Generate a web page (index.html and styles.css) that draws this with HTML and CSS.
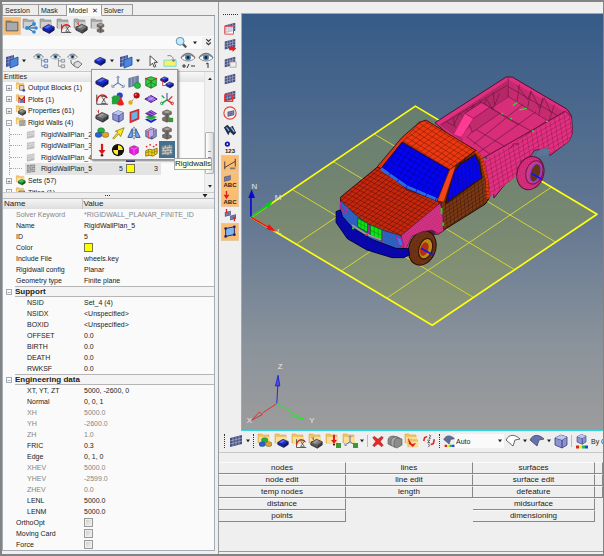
FILE: index.html
```html
<!DOCTYPE html>
<html lang="en">
<head>
<meta charset="utf-8">
<title>Model browser</title>
<link rel="stylesheet" href="styles.css">
</head>
<body>
<svg class="defs" aria-hidden="true">
  <defs>
    <symbol id="plate" viewBox="0 0 16 16"><path d="M1 7l7-4 7 3v4l-6 4-8-4z" fill="currentColor" stroke="#223" stroke-width=".8"/><path d="M1 7l8 3v4l-8-4z" fill="#000" opacity=".25"/><path d="M9 10l6-4v4l-6 4z" fill="#000" opacity=".45"/><path d="M3 7l5-3 3 1-5 3z" fill="#fff" opacity=".3"/></symbol>
    <symbol id="folder" viewBox="0 0 16 16"><path d="M1 1h4l1 1h6v8H1z" fill="#f0c468" stroke="#d8a850" stroke-width=".6"/><path d="M2 4h11v6H2z" fill="#fce09a"/></symbol>
    <symbol id="gfolder" viewBox="0 0 16 16"><path d="M1 1h4l1 1h6v8H1z" fill="#a8a8a8" stroke="#888" stroke-width=".6"/><path d="M2 4h11v6H2z" fill="#cfcfcf"/></symbol>
    <symbol id="bigfolder" viewBox="0 0 16 16"><path d="M2 3h5l1 1h6v9H2z" fill="#858585" stroke="#666" stroke-width=".7"/><path d="M3 5h10v7H3z" fill="#aaa"/></symbol>
    <symbol id="share" viewBox="0 0 16 16"><use href="#gfolder"/><path d="M5 10l7-4M5 10l9 0M5 10l7 4" stroke="#257" fill="none"/><g fill="#2b8be0"><circle cx="5" cy="10" r="2"/><circle cx="12" cy="6" r="2"/><circle cx="14" cy="10" r="1.8"/><circle cx="12" cy="14" r="1.8"/></g></symbol>
    <symbol id="graph" viewBox="0 0 16 16"><path d="M2 14V3M2 14h13" stroke="#333" fill="none"/><path d="M2 11c1-8 8-10 12-4" fill="none" stroke="#e02020" stroke-width="1.6"/><path d="M7 5h6M7 13h6M8 6l4 6M12 6l-4 6" stroke="#444" fill="none"/></symbol>
    <symbol id="beam" viewBox="0 0 16 16"><path d="M3 3l5-2 5 2v3l-3 1v3l3 1v2l-5 2-5-2v-3l3-1V7L3 6z" fill="#79716d" stroke="#4c4744" stroke-width=".7"/><path d="M4 3l4-1 4 1-4 2z" fill="#aaa09c"/><path d="M8 5v9" stroke="#4c4744"/></symbol>
    <symbol id="eye" viewBox="0 0 16 16"><path d="M1 6c4-6 10-6 14 0" fill="none" stroke="#777" stroke-width="1.4"/><path d="M1 6c4 4 10 4 14 0-4-4-10-4-14 0z" fill="#fff" stroke="#777" stroke-width=".8"/><circle cx="8" cy="5.500" r="3" fill="#4b86b8"/><circle cx="8" cy="5.500" r="1.400" fill="#123"/></symbol>
    <symbol id="mesh" viewBox="0 0 16 16"><path d="M2 4l8-2v10l-8 2z" fill="#454f91"/><path d="M2 7l8-2M2 10l8-2M5 3v10M8 2v10" stroke="#a6aed9" stroke-width=".6"/><path d="M6 7l8-3v8l-8 3z" fill="#4a87dc" stroke="#1b4d9c" stroke-width=".8"/></symbol>
    <symbol id="grid" viewBox="0 0 16 16"><path d="M2 5l12-3v9L2 14z" fill="#45507f"/><path d="M2 8l12-3M2 11l12-3M5 4v9M8 3v9M11 3v9" stroke="#a5abc6" stroke-width=".8"/></symbol>
    <symbol id="cube" viewBox="0 0 16 16"><path d="M2 5l6-3 6 2v8l-5 3-7-3z" fill="#8b93d2" stroke="#373d79" stroke-width=".8"/><path d="M2 5l7 2 5-3M9 7v8" stroke="#373d79" fill="none"/><path d="M2 5l6-3 6 2-5 3z" fill="#bfc5ec"/></symbol>
    <symbol id="axes" viewBox="0 0 16 16"><path d="M8 9V2M8 9l-6 4M8 9l6 4" stroke="#596fa8" stroke-width="1.3" fill="none"/><path d="M6 3l2-2 2 2M1 11v3h3M12 14h3v-3" fill="none" stroke="#596fa8" stroke-width=".8"/></symbol>
    <symbol id="axesrg" viewBox="0 0 16 16"><path d="M8 9V1" stroke="#4560b0" stroke-width="1.300"/><path d="M8 9l-6 4M2 4l3 3" stroke="#18a048" stroke-width="1.500"/><path d="M8 9l6 4M14 5l-4 4" stroke="#d22" stroke-width="1.500"/><circle cx="2" cy="13" r="1.500" fill="none" stroke="#18a048"/><circle cx="14" cy="13" r="1.500" fill="none" stroke="#d22"/></symbol>
    <symbol id="greenmesh" viewBox="0 0 16 16"><path d="M2 4l11-3v10L2 14z" fill="#7084a9" stroke="#405078" stroke-width=".6"/><path d="M5 3v10M9 2v10" stroke="#aab"/><circle cx="12" cy="12" r="3.500" fill="#20c340" stroke="#087018" stroke-width=".6"/></symbol>
    <symbol id="greencube" viewBox="0 0 16 16"><path d="M2 4l6-2 6 2v8l-6 3-6-3z" fill="#3cc84b" stroke="#08861d"/><path d="M2 4l6 3 6-3M8 7v8M2 12l6-4 6 4" fill="none" stroke="#08861d"/><g fill="#e22"><circle cx="2" cy="4" r="1"/><circle cx="14" cy="4" r="1"/><circle cx="8" cy="7" r="1"/><circle cx="8" cy="14" r="1"/></g></symbol>
    <symbol id="twoplates" viewBox="0 0 16 16"><use href="#plate" width="10" height="10"/><use href="#plate" x="6" y="6" width="10" height="10"/><path d="M3 6v6h5" fill="none" stroke="#d22" stroke-width=".9"/></symbol>
    <symbol id="shapes" viewBox="0 0 16 16"><circle cx="10" cy="4" r="3.500" fill="#2343ce"/><path d="M1 6l2-2h7v7l-1 3H1z" fill="#23a43a"/><path d="M11 5l4 9c-2 2-6 2-8 0z" fill="#e32424"/></symbol>
    <symbol id="balls" viewBox="0 0 16 16"><circle cx="11" cy="4" r="3.500" fill="#b80d0d"/><circle cx="10" cy="3" r="1" fill="#ff8c6c"/><circle cx="4" cy="12" r="2.500" fill="#e6ad16"/><path d="M6 10l3-4" stroke="#555" stroke-dasharray="1"/></symbol>
    <symbol id="rhomb" viewBox="0 0 16 16"><path d="M1 8l7-4 7 4-7 4z" fill="#8b4ed0" stroke="#311782"/><path d="M4 6l7 4M6 5l7 4M4 10l7-4" stroke="#d8b4ff" stroke-width=".8"/></symbol>
    <symbol id="graysection" viewBox="0 0 16 16"><g color="#777"><use href="#plate" y="1"/></g><path d="M2 2l2 2M1 7h3" stroke="#222" stroke-dasharray="1"/><path d="M4 1v4" stroke="#c22"/></symbol>
    <symbol id="redframe" viewBox="0 0 16 16"><path d="M4 4l9-3v10l-9 4z" fill="#67b4e5" stroke="#d52b2b" stroke-width="2"/></symbol>
    <symbol id="layers" viewBox="0 0 16 16"><path d="M1 12l7-3 7 3-7 4z" fill="#2424cd"/><path d="M1 9l7-3 7 3-7 4z" fill="#19af35" stroke="#eee" stroke-width=".5"/><path d="M1 5l7-4 7 4-7 4z" fill="#6e2ca6"/><path d="M4 4l7 3M7 2l6 4" stroke="#caf" stroke-width=".7"/></symbol>
    <symbol id="beamgreen" viewBox="0 0 16 16"><use href="#beam"/><path d="M10 10h5v5h-5z" fill="#3c9632"/></symbol>
    <symbol id="trio" viewBox="0 0 16 16"><g stroke="#253" stroke-width=".5"><ellipse cx="7" cy="5" rx="4" ry="3" fill="#25b338"/><ellipse cx="4" cy="10" rx="4" ry="3" fill="#285fe0"/><ellipse cx="12" cy="10" rx="4" ry="3" fill="#eca023"/></g></symbol>
    <symbol id="arrowup" viewBox="0 0 16 16"><path d="M2 14l6-7-3-1 10-4-4 10-2-3-6 6z" fill="#ffe91a" stroke="#877a10" stroke-width=".9"/></symbol>
    <symbol id="mirror" viewBox="0 0 16 16"><path d="M6 3v10H1zM10 3v10h5z" fill="#76b2ef" stroke="#17499e"/><path d="M8 1v14" stroke="#333" stroke-dasharray="2 1"/></symbol>
    <symbol id="cubecut" viewBox="0 0 16 16"><use href="#cube"/><path d="M5 5l6-2v8l-6 3z" fill="#a7b4ed" stroke="#da4055"/></symbol>
    <symbol id="load" viewBox="0 0 16 16"><path d="M8 1v9" stroke="#df1515" stroke-width="2.500"/><path d="M4 8h8l-4 5z" fill="#df1515"/><circle cx="8" cy="14" r="1.500" fill="#611"/></symbol>
    <symbol id="mass" viewBox="0 0 16 16"><circle cx="8" cy="8" r="7" fill="#111"/><path d="M8 2.500V8h5.500A5.500 5.500 0 0 0 8 2.500zM8 8v5.500A5.500 5.500 0 0 1 2.500 8z" fill="#ffe92c"/></symbol>
    <symbol id="pink" viewBox="0 0 16 16"><path d="M3 5l5-2 5 2v6l-5 3-5-3z" fill="#e51bdc" stroke="#871382" stroke-width=".7"/><path d="M3 5l5 2 5-2M8 7v7" stroke="#ff8bff" stroke-width=".7" fill="none"/></symbol>
    <symbol id="dots" viewBox="0 0 16 16"><path d="M2 9l4-2 4 1 5-2v6l-5 3-4-1-4 1z" fill="#f1d415" stroke="#876d08"/><path d="M5 8v6M9 8v6M12 7v6M2 11l4-1 4 1 5-2" stroke="#876d08" fill="none" stroke-width=".7"/><g fill="#d22"><circle cx="3" cy="4" r="1"/><circle cx="7" cy="2" r="1"/><circle cx="11" cy="4" r="1"/><circle cx="14" cy="2" r="1"/></g></symbol>
    <symbol id="wall" viewBox="0 0 16 16"><path d="M2 3l12-1v11L2 14z" fill="#858a85"/><path d="M2 6l12-1M2 9l12-1M2 12l12-1M6 3v3M11 2v3M4 6v3M9 5v3M6 9v3M12 8v3M9 11v3" stroke="#ddd" stroke-width=".8"/></symbol>
    <symbol id="wallpale" viewBox="0 0 16 16"><path d="M2 4l11-2v10L2 14z" fill="#bbb"/><path d="M2 7l11-2M2 10l11-2M5 3v3M9 3v3M7 6v3M11 5v3M5 9v3" stroke="#eee" stroke-width=".8"/></symbol>
    <symbol id="cursor" viewBox="0 0 16 16"><path d="M5 1v12l3-3 2 5 2-1-2-5h4z" fill="#fff" stroke="#222"/></symbol>
    <symbol id="note" viewBox="0 0 16 16"><path d="M1 7h14v7H1z" fill="#f6f36b" stroke="#68d8db"/><path d="M5 2c5-1 7 2 7 6M10 6l2 3 2-3" fill="none" stroke="#777"/></symbol>
    <symbol id="cross" viewBox="0 0 16 16"><path d="M3 1l5 4 5-4 2 2-4 5 4 5-2 2-5-4-5 4-2-2 4-5-4-5z" fill="#e62929" stroke="#8b1515" stroke-width=".6"/></symbol>
    <symbol id="stack" viewBox="0 0 16 16"><g fill="#8b8b8b" stroke="#555" stroke-width=".6"><path d="M1 7c0-3 3-4 5-4l5 1v6l-6 3-4-2z"/><path d="M4 8c0-3 3-4 5-4l4 1v6l-6 3-3-2z" fill="#aaa"/><path d="M7 9c0-3 3-4 4-4l4 1v6l-5 3-3-1z"/></g></symbol>
    <symbol id="nums" viewBox="0 0 16 16"><path d="M2 8l1-4 3-1M14 6l-1 5-3 1" fill="none" stroke="#d22" stroke-width="1.800"/><path d="M8 1l2 1-2 3h2M6 7h3l-2 2 2 1H6M7 12l2 1-2 2" fill="none" stroke="#555"/></symbol>
    <symbol id="leaf" viewBox="0 0 16 16"><path d="M1 7c3-6 9-6 14-1l-5 1-2 6z" fill="currentColor" stroke="#555" stroke-width=".9"/></symbol>
    <symbol id="rainbow" viewBox="0 0 16 16"><path d="M2 14h3" stroke="#d22" stroke-width="3"/><path d="M5 14h3" stroke="#ee2" stroke-width="3"/><path d="M8 14h3" stroke="#2b4" stroke-width="3"/><path d="M11 14h3" stroke="#24e" stroke-width="3"/></symbol>
    <symbol id="down" viewBox="0 0 5 4"><path d="M0 0h5L2.500 3.500z" fill="#222"/></symbol>
    <symbol id="tiny" viewBox="0 0 16 16"><path d="M5 1v11h4M5 4h4" fill="none" stroke="#777"/><path d="M9 2h5v4H9zM9 10h5v4H9z" fill="#dce5f5" stroke="currentColor"/></symbol>
  </defs>
</svg>
<div class="app">
  <aside class="sidebar">
    <nav class="tabs">
      <button class="tab">Session</button><button class="tab">Mask</button><button class="tab tab-on">Model <span class="x">✕</span></button><button class="tab">Solver</button>
    </nav>
    <div class="panel">
      <div class="tools tools-a">
        <button class="ico on" aria-label="Model view"><svg viewBox="0 0 16 16"><use href="#bigfolder"/></svg></button>
        <button class="ico" aria-label="Hierarchy"><svg viewBox="0 0 16 16"><use href="#share"/></svg></button>
        <button class="ico blue" aria-label="Components"><svg viewBox="0 0 16 16"><use href="#gfolder"/><use href="#plate" x="3" y="4" width="13" height="13"/></svg></button>
        <button class="ico" aria-label="Curves"><svg viewBox="0 0 16 16"><use href="#gfolder"/><use href="#graph" x="4" y="4" width="12" height="12"/></svg></button>
        <button class="ico" aria-label="Properties"><svg viewBox="0 0 16 16"><use href="#gfolder"/><use href="#graysection" x="2" y="3" width="13" height="13"/></svg></button>
        <button class="ico" aria-label="Sections"><svg viewBox="0 0 16 16"><use href="#gfolder"/><use href="#beam" x="5" y="4" width="11" height="12"/></svg></button>
      </div>
      <div class="search">
        <input type="text" aria-label="Search">
        <button class="ico" aria-label="Find"><svg viewBox="0 0 16 16"><path d="M10 9l4 4" stroke="#555" stroke-width="2.500"/><circle cx="7" cy="6" r="4.500" fill="#c4ecfc" stroke="#5683a5"/></svg></button>
        <svg class="down"><use href="#down"/></svg>
        <button class="more" aria-label="More"><svg viewBox="0 0 8 8"><path d="M2 1l2 2 2-2M2 4l2 2 2-2" fill="none" stroke="#334"/></svg></button>
      </div>
      <div class="tools tools-b">
        <button class="ico" aria-label="Elements"><svg viewBox="0 0 16 16"><use href="#mesh"/></svg></button>
        <svg class="down"><use href="#down"/></svg>
        <button class="ico first-eye" aria-label="Show tree"><svg viewBox="0 0 16 16"><use href="#eye" width="11" height="11"/><use href="#tiny" x="5" y="5" width="11" height="11" color="#35a"/></svg></button>
        <button class="ico" aria-label="Hide tree"><svg viewBox="0 0 16 16"><use href="#eye" width="11" height="11"/><use href="#tiny" x="5" y="5" width="11" height="11" color="#777"/></svg></button>
        <button class="ico" aria-label="Isolate"><svg viewBox="0 0 16 16"><use href="#eye" width="11" height="11"/><path d="M4 7v3l3 3M7 10l4-2 4 3-4 4-4-2z" fill="#ddd" stroke="#777"/></svg></button>
        <button class="ico blue entity" aria-label="Entity type"><svg viewBox="0 0 16 16"><use href="#plate" x="2" y="2" width="12" height="12"/></svg></button>
        <svg class="down"><use href="#down"/></svg>
        <button class="ico" aria-label="Geometry"><svg viewBox="0 0 16 16"><use href="#mesh"/></svg></button>
        <svg class="down"><use href="#down"/></svg>
        <button class="ico" aria-label="Select"><svg viewBox="0 0 16 16"><use href="#cursor" x="2" y="2" width="13" height="13"/></svg></button>
        <button class="ico" aria-label="Append"><svg viewBox="0 0 16 16"><use href="#note" x="1" width="14"/></svg></button>
        <button class="ico" aria-label="Show or hide"><svg viewBox="0 0 16 16"><use href="#eye" y="-1"/><path d="M2 13h4M4 11v4M7 15l2-4M11 13h4" stroke="#333"/></svg></button>
        <button class="ico" aria-label="Show one"><svg viewBox="0 0 16 16"><use href="#eye" y="-1"/><path d="M8 11l2-1v5" fill="none" stroke="#333"/></svg></button>
      </div>
      <div class="tree">
        <div class="tree-main">
          <div class="tree-head">Entities</div>
          <ul class="rows">
            <li><button class="box">+</button><svg viewBox="0 0 16 16"><use href="#folder"/><path d="M6 5h6v7H6z" fill="#ddd" stroke="#844"/><circle cx="12" cy="12" r="2" fill="#25b"/></svg>Output Blocks (1)</li>
            <li><button class="box">+</button><svg viewBox="0 0 16 16"><use href="#folder"/><path d="M5 13V5l4 4 4-5v9" fill="none" stroke="#b22" stroke-width="1.5"/><path d="M8 13V9M11 13V8" stroke="#24c" stroke-width="2"/></svg>Plots (1)</li>
            <li><button class="box">+</button><svg viewBox="0 0 16 16"><use href="#folder"/><use href="#graysection" x="3" y="3" width="13" height="13"/></svg>Properties (61)</li>
            <li><button class="box">−</button><svg viewBox="0 0 16 16"><use href="#folder"/><use href="#wall" x="4" y="3" width="12" height="12"/></svg>Rigid Walls (4)</li>
            <li class="child"><svg viewBox="0 0 16 16"><use href="#wallpale"/></svg>RigidWallPlan_2</li>
            <li class="child"><svg viewBox="0 0 16 16"><use href="#wallpale"/></svg>RigidWallPlan_3</li>
            <li class="child"><svg viewBox="0 0 16 16"><use href="#wallpale"/></svg>RigidWallPlan_4<span class="id">4</span><i class="swatch sw-blue"></i><span class="inc">3</span></li>
            <li class="child chosen"><svg viewBox="0 0 16 16"><use href="#wall"/></svg>RigidWallPlan_5<span class="id">5</span><i class="swatch"></i><span class="inc">3</span></li>
            <li><button class="box">+</button><svg viewBox="0 0 16 16"><use href="#folder"/><g color="#18b431"><use href="#plate" x="3" y="4" width="12" height="12"/></g></svg>Sets (57)</li>
            <li><button class="box">+</button><svg viewBox="0 0 16 16"><use href="#folder"/><path d="M5 6h8v7H5z" fill="#ddd" stroke="#333"/></svg>Titles (1)</li>
          </ul>
        </div>
        <div class="scroll"><svg><use href="#down" class="flip"/></svg><span class="thumb"></span><svg><use href="#down"/></svg></div>
      </div>
      <div class="split"><span class="grip"></span><svg viewBox="0 0 5 4"><use href="#down" width="5" height="4"/></svg></div>
      <table class="props">
        <thead><tr><th>Name</th><th>Value</th></tr></thead>
        <tbody>
          <tr class="dim"><td>Solver Keyword</td><td>*RIGIDWALL_PLANAR_FINITE_ID</td></tr>
          <tr><td>Name</td><td>RigidWallPlan_5</td></tr>
          <tr><td>ID</td><td>5</td></tr>
          <tr><td>Color</td><td><i class="swatch"></i></td></tr>
          <tr><td>Include File</td><td>wheels.key</td></tr>
          <tr><td>Rigidwall config</td><td>Planar</td></tr>
          <tr><td>Geometry type</td><td>Finite plane</td></tr>
        </tbody>
        <tbody class="sub">
          <tr class="group"><th colspan="2"><div class="group-row"><button class="box">−</button><span>Support</span></div></th></tr>
          <tr><td>NSID</td><td>Set_4 (4)</td></tr>
          <tr><td>NSIDX</td><td>&lt;Unspecified&gt;</td></tr>
          <tr><td>BOXID</td><td>&lt;Unspecified&gt;</td></tr>
          <tr><td>OFFSET</td><td>0.0</td></tr>
          <tr><td>BIRTH</td><td>0.0</td></tr>
          <tr><td>DEATH</td><td>0.0</td></tr>
          <tr><td>RWKSF</td><td>0.0</td></tr>
          <tr class="group"><th colspan="2"><div class="group-row"><button class="box">−</button><span>Engineering data</span></div></th></tr>
          <tr><td>XT, YT, ZT</td><td>5000, -2600, 0</td></tr>
          <tr><td>Normal</td><td>0, 0, 1</td></tr>
          <tr class="dim"><td>XH</td><td>5000.0</td></tr>
          <tr class="dim"><td>YH</td><td>-2600.0</td></tr>
          <tr class="dim"><td>ZH</td><td>1.0</td></tr>
          <tr><td>FRIC</td><td>0.3</td></tr>
          <tr><td>Edge</td><td>0, 1, 0</td></tr>
          <tr class="dim"><td>XHEV</td><td>5000.0</td></tr>
          <tr class="dim"><td>YHEV</td><td>-2599.0</td></tr>
          <tr class="dim"><td>ZHEV</td><td>0.0</td></tr>
          <tr><td>LENL</td><td>5000.0</td></tr>
          <tr><td>LENM</td><td>5000.0</td></tr>
        </tbody>
        <tbody>
          <tr><td><label for="ortho">OrthoOpt</label></td><td><input type="checkbox" id="ortho"></td></tr>
          <tr><td><label for="moving">Moving Card</label></td><td><input type="checkbox" id="moving"></td></tr>
          <tr><td><label for="force">Force</label></td><td><input type="checkbox" id="force"></td></tr>
        </tbody>
      </table>
      <div class="popup">
        <button aria-label="Components" class="blue"><svg viewBox="0 0 16 16"><use href="#plate"/></svg></button>
        <button aria-label="Systems"><svg viewBox="0 0 16 16"><use href="#axes"/></svg></button>
        <button aria-label="Elements"><svg viewBox="0 0 16 16"><use href="#greenmesh"/></svg></button>
        <button aria-label="Solids"><svg viewBox="0 0 16 16"><use href="#greencube"/></svg></button>
        <button aria-label="Connectors" class="blue"><svg viewBox="0 0 16 16"><use href="#twoplates"/></svg></button>
        <button aria-label="Curves"><svg viewBox="0 0 16 16"><use href="#graph"/></svg></button>
        <button aria-label="Shapes"><svg viewBox="0 0 16 16"><use href="#shapes"/></svg></button>
        <button aria-label="Nodes"><svg viewBox="0 0 16 16"><use href="#balls"/></svg></button>
        <button aria-label="Surfaces"><svg viewBox="0 0 16 16"><use href="#rhomb"/></svg></button>
        <button aria-label="Joints"><svg viewBox="0 0 16 16"><use href="#axesrg"/></svg></button>
        <button aria-label="Properties"><svg viewBox="0 0 16 16"><use href="#graysection"/></svg></button>
        <button aria-label="Blocks"><svg viewBox="0 0 16 16"><use href="#cube"/></svg></button>
        <button aria-label="Sections"><svg viewBox="0 0 16 16"><use href="#redframe"/></svg></button>
        <button aria-label="Laminates"><svg viewBox="0 0 16 16"><use href="#layers"/></svg></button>
        <button aria-label="Beam collectors"><svg viewBox="0 0 16 16"><use href="#beamgreen"/></svg></button>
        <button aria-label="Assemblies"><svg viewBox="0 0 16 16"><use href="#trio"/></svg></button>
        <button aria-label="Vectors"><svg viewBox="0 0 16 16"><use href="#arrowup"/></svg></button>
        <button aria-label="Symmetry"><svg viewBox="0 0 16 16"><use href="#mirror"/></svg></button>
        <button aria-label="Cross sections"><svg viewBox="0 0 16 16"><use href="#cubecut"/></svg></button>
        <button aria-label="Beam sections"><svg viewBox="0 0 16 16"><use href="#beam"/></svg></button>
        <button aria-label="Loads"><svg viewBox="0 0 16 16"><use href="#load"/></svg></button>
        <button aria-label="Masses"><svg viewBox="0 0 16 16"><use href="#mass"/></svg></button>
        <button aria-label="Volumes"><svg viewBox="0 0 16 16"><use href="#pink"/></svg></button>
        <button aria-label="Particles"><svg viewBox="0 0 16 16"><use href="#dots"/></svg></button>
        <button aria-label="Rigidwalls" class="picked"><svg viewBox="0 0 16 16"><use href="#wall"/></svg></button>
      </div>
      <div class="tip">Rigidwalls</div>
    </div>
  </aside>

  <main class="main">
    <div class="stage">
      <div class="vtools">
        <span class="handle-h"></span>
        <button class="ico" aria-label="Mask"><svg viewBox="0 0 16 16"><use href="#grid"/><path d="M2 6h10v9H2z" fill="#fffa" stroke="#e33"/></svg></button>
        <button class="ico" aria-label="Reverse"><svg viewBox="0 0 16 16"><use href="#grid" y="-1"/><path d="M7 10h4V8l4 4-4 4v-2H7z" fill="#d22"/></svg></button>
        <button class="ico" aria-label="Unmask adjacent"><svg viewBox="0 0 16 16"><use href="#grid"/><path d="M8 8h7v6H8z" fill="#eee" stroke="#aaa"/></svg></button>
        <button class="ico" aria-label="Unmask all"><svg viewBox="0 0 16 16"><use href="#grid"/></svg></button>
        <button class="ico" aria-label="Mask outside"><svg viewBox="0 0 16 16"><use href="#grid"/><path d="M2 7h9v7H2z" fill="none" stroke="#e33" stroke-width="1.5"/></svg></button>
        <button class="ico" aria-label="Spherical clip"><svg viewBox="0 0 16 16"><use href="#grid" x="4" y="3" width="10" height="11"/><circle cx="8" cy="8" r="7" fill="none" stroke="#e54438" stroke-width="1.300"/></svg></button>
        <button class="ico" aria-label="Find"><svg viewBox="0 0 16 16"><path d="M1 5l4-3 3 3 3-2 4 8-3 3-4-4-2 4z" fill="#1e2e4c"/><path d="M4 5l3 4M9 5l4 5" stroke="#8bb5e2" stroke-width="1.500"/></svg></button>
        <button class="ico numbers" aria-label="Numbers"><svg viewBox="0 0 16 8"><circle cx="5" cy="4" r="3" fill="#1717a8"/><circle cx="5" cy="4" r="1" fill="#fff"/></svg><span>123</span></button>
        <button class="ico on" aria-label="Measure"><svg viewBox="0 0 16 16"><path d="M2 14V5M14 11V2M2 12l12-7" stroke="#334" fill="none"/><path d="M8 13h6" stroke="#876" stroke-width="2"/></svg></button>
        <button class="ico on label" aria-label="Element labels"><svg viewBox="0 0 16 9"><use href="#grid" x="0" y="0" width="10" height="10"/></svg><span>ABC</span></button>
        <button class="ico on label" aria-label="Load labels"><svg viewBox="0 0 16 9"><path d="M4 0v7M2 5l2 3 2-3z" stroke="#d22" fill="#d22" stroke-width="1.500"/></svg><span>ABC</span></button>
        <button class="ico" aria-label="Renumber"><svg viewBox="0 0 16 16"><use href="#grid" x="1" y="2" width="9" height="9"/><use href="#grid" x="7" y="6" width="9" height="9"/><path d="M4 1v5M13 10v5" stroke="#d22" stroke-width="1.500"/></svg></button>
        <button class="ico on" aria-label="Fit plane"><svg viewBox="0 0 16 16"><path d="M3 4l10-2v9L3 13z" fill="#7fb7ed" stroke="#216"/><g fill="#226"><circle cx="3" cy="4" r="1.500"/><circle cx="13" cy="2" r="1.500"/><circle cx="13" cy="11" r="1.500"/><circle cx="3" cy="13" r="1.500"/></g></svg></button>
      </div>
      <div class="view">
        <svg viewBox="241 14 363 415" role="img" aria-label="Pickup truck mesh above a finite rigid wall plane">
          <defs>
            <pattern id="m-roof" width="1" height="1" patternUnits="userSpaceOnUse" patternTransform="matrix(13 8 12 -9 488 240)"><path d="M0 0h1M0 0v1" stroke="#5a1000" stroke-width=".15"/></pattern>
            <pattern id="m-hood" width="1" height="1" patternUnits="userSpaceOnUse" patternTransform="matrix(12 6 11 -9 300 420)"><path d="M0 0h1M0 0v1" stroke="#400600" stroke-width=".17"/></pattern>
            <pattern id="m-glass" width="1" height="1" patternUnits="userSpaceOnUse" patternTransform="matrix(14 8 -9 13 485 245)"><path d="M0 0h1M0 0v1" stroke="#000070" stroke-width=".14"/></pattern>
            <pattern id="m-side" width="1" height="1" patternUnits="userSpaceOnUse" patternTransform="matrix(11 -7 1 11 610 505)"><path d="M0 0h1M0 0v1" stroke="#180500" stroke-width=".15"/></pattern>
            <pattern id="m-bed" width="1" height="1" patternUnits="userSpaceOnUse" patternTransform="matrix(14 -8 2 13 740 330)"><path d="M0 0h1M0 0v1" stroke="#6c0c3a" stroke-width=".13"/></pattern>
            <pattern id="m-fine" width="7" height="7" patternUnits="userSpaceOnUse" patternTransform="rotate(-28)"><path d="M0 0h7M0 0v7" stroke="#200020" stroke-width="1"/></pattern>
          </defs>
          <g transform="translate(240 60) scale(.33333)" stroke-linejoin="round">
            <path d="M30 470L526 135l548 326-497 335z" fill="#a2aa30" fill-opacity=".33"/>
            <g stroke="#d4d52c" stroke-width="3"><path d="M154 386l547 326M278 302l547 326M402 219l547 326M167 551l497-335M303 632l497-335M440 714l497-335"/></g>
            <path d="M30 470L526 135l548 326-497 335z" fill="none" stroke="#ffff10" stroke-width="5"/>
            <!-- cargo bed -->
            <path d="M585 185L800 47l18 0 165 97 14 20 3 52-10 24-58 44-7-21-40 5-35 50-40 36-47 58-6-90-27-47-75-30z" fill="#df2f7e" stroke="#501034" stroke-width="3"/>
            <path d="M598 192L803 58l5 46-74 48-66 88z" fill="#b52868"/>
            <path d="M806 55l170 96-50 27-118-72z" fill="#c62b70"/>
            <path d="M808 106l118 70-55 30-150 92-20-35-30-27-12-12z" fill="#d82d79"/>
            <g fill="none" stroke="#681640" stroke-width="2"><path d="M806 50v56l118 72M808 106l-130 85M806 76l150 88M604 191l201-120M640 168l6 32M680 143l10 24M720 117l14 38M760 92l5 40M840 70l-7 50M875 89l-10 50M910 110l-12 52M945 131l-15 48M833 73l32 42 10-25 25 50 15-30 20 45M620 182l20 12 20-38 20 25 20-50 20 34 20-52 20 32 20-49M725 125l150 85M755 142l82 50M700 200l98 58M680 227l70 52M850 130L702 250M890 152L714 277M760 138l-75 88M925 177L735 310M720 297l258-145"/></g>
            <path d="M675 157l50-33 55 33-82 57z" fill="#c12a6d" stroke="#681640" stroke-width="2"/>
            <path d="M675 157l50-33 26 14-50 34z" fill="#e22e80" stroke="#681640" stroke-width="2"/>
            <path d="M675 157l26 15-36 57-24-8z" fill="#ff3a94" stroke="#9a1c58" stroke-width="1.500"/>
            <path d="M722 305l255-150 19 12 4 48-10 25-58 42-7-21-40 5-32 46-15 28-88 70-6-60z" fill="#e0307f"/>
            <path d="M722 305l255-150 19 12 4 48-10 25-58 42-7-21-40 5-32 46-15 28-88 70-6-60z" fill="url(#m-bed)"/>
            <path d="M720 298l258-148 18 16M812 262l12-14 14 2" fill="none" stroke="#7a1448" stroke-width="3"/>
            <path d="M930 282l2-17-12-4-20 5-12 22z" fill="#5b7594"/>
            <g stroke="#24e22c" stroke-width="4"><path d="M820 133l14-9M840 146l22-4M786 156l4 3M812 171l5 3M878 209l6 3M920 181h6"/></g>
            <ellipse cx="873" cy="337" rx="40" ry="51" transform="rotate(18 873 337)" fill="#db2f80" stroke="#651039" stroke-width="3"/>
            <ellipse cx="873" cy="337" rx="40" ry="51" transform="rotate(18 873 337)" fill="url(#m-fine)" opacity=".45"/>
            <ellipse cx="885" cy="335" rx="25" ry="36" transform="rotate(18 885 335)" fill="#d63890" stroke="#6b164b" stroke-width="3"/>
            <ellipse cx="888" cy="336" rx="16" ry="29" transform="rotate(18 888 336)" fill="#673315" stroke="#8c45c1" stroke-width="5"/>
            <path d="M876 338l31 17" stroke="#1015ff" stroke-width="5"/>
            <!-- front wheel -->
            <path d="M560 525l10-32 30-10 8 30-12 10z" fill="#55214e"/>
            <ellipse cx="547" cy="563" rx="40" ry="53" transform="rotate(20 547 563)" fill="#743613" stroke="#281004" stroke-width="3"/>
            <ellipse cx="547" cy="563" rx="40" ry="53" transform="rotate(20 547 563)" fill="url(#m-fine)" opacity=".6"/>
            <ellipse cx="557" cy="565" rx="20" ry="32" transform="rotate(18 557 565)" fill="#b98c19" stroke="#3a1907" stroke-width="4"/>
            <ellipse cx="553" cy="566" rx="12" ry="21" transform="rotate(18 553 566)" fill="#b42c13"/>
            <path d="M543 564l35 19" stroke="#1212f4" stroke-width="5"/>
            <!-- cab -->
            <path d="M708 268l20 24 16 65 4 57-12 17-128 80-9-82 46-110z" fill="#7a3814" stroke="#250b00" stroke-width="3"/>
            <path d="M708 268l20 24 16 65 4 57-12 17-128 80-9-82 46-110z" fill="url(#m-side)"/>
            <path d="M706 282l12 21 9 48-110 78 22-92 21-27z" fill="#0505f0" stroke="#351400" stroke-width="4"/>
            <path d="M706 282l12 21 9 48-110 78 22-92 21-27z" fill="url(#m-side)" opacity=".6"/>
            <path d="M707 270l19 22 16 65 3 57" fill="none" stroke="#df3810" stroke-width="8"/>
            <path d="M707 270l19 22 16 65 3 57" fill="none" stroke="#401000" stroke-width="9" stroke-dasharray="1 9"/>
            <path d="M486 242L538 184l20-7 150 91-64 48-15 14z" fill="#ec3810" stroke="#4b1208" stroke-width="3"/>
            <path d="M486 242L538 184l20-7 150 91-64 48-15 14z" fill="url(#m-roof)"/>
            <path d="M540 182l-55 48-74 88 10 6 65-80" fill="#df3510" stroke="#3b1720" stroke-width="3"/>
            <path d="M486 244l143 83-37 94-91-35-77-65z" fill="#0303f2" stroke="#2f0d10" stroke-width="2"/>
            <path d="M486 244l143 83-37 94-91-35-77-65z" fill="url(#m-glass)"/>
            <path d="M629 327l20-14-37 112-20-4z" fill="#f24618" stroke="#541208" stroke-width="2"/>
            <!-- hood and nose -->
            <path d="M411 319l15 6 73 60 100 39-5 15-110 90-106-20-78-87 1-13z" fill="#c4270d" stroke="#3b0b0b" stroke-width="3"/>
            <path d="M411 319l15 6 73 60 100 39-5 15-110 90-106-20-78-87 1-13z" fill="url(#m-hood)"/>
            <path d="M422 323l77 55 93 39" fill="none" stroke="#286ae4" stroke-width="9" stroke-dasharray="30 2"/>
            <path d="M600 428l8 20 3 64-15 8-20-11-30 5-31 14-16 36-12 3-4-42z" fill="#d93486" stroke="#5f1245" stroke-width="2"/>
            <path d="M600 428l8 20 3 64-15 8-20-11-30 5-31 14-16 36-12 3-4-42z" fill="url(#m-fine)" opacity=".5"/>
            <path d="M300 420l45 42 38 30 54 20 46 14 9 40-32 2-100-40-58-50z" fill="#2d66c8" stroke="#172454" stroke-width="2"/>
            <path d="M300 420l45 42 38 30 54 20 46 14 9 40-32 2-100-40-58-50z" fill="url(#m-fine)" opacity=".4"/>
            <path d="M300 423l-1 26 17 9 4-19M430 514l-2 38M385 493l-2 31" stroke="#b028a5" stroke-width="4" fill="none"/>
            <path d="M352 473l30 16v27l-30-17zM390 493l35 15v33l-35-16z" fill="#0de418" stroke="#08671a" stroke-width="3"/>
            <path d="M362 478v27M372 483v28M352 486l30 16M402 498v32M414 503v33M390 509l35 16" stroke="#07800e" stroke-width="1.500"/>
            <path d="M467 528l18 8 5 25-14-8zM482 530l10 30" fill="#327ee0" stroke="#a321a5" stroke-width="3"/>
            <path d="M335 494l40 26 47 18" fill="none" stroke="#aa9989" stroke-width="5"/>
            <path d="M287 453l13-5 6 20 31 35 58 34 72 27 38 1 4 18-18 9-35 0-76-23-59-34-34-49z" fill="#0707b4" stroke="#030345" stroke-width="3"/>
            <path d="M287 453l13-5 6 20 31 35 58 34 72 27 38 1 4 18-18 9-35 0-76-23-59-34-34-49z" fill="url(#m-fine)" opacity=".5"/>
            <path d="M605 442v18M610 486v10M338 500v6" stroke="#28cf1c" stroke-width="6"/>
            <path d="M303 447h8M483 556l8 5M375 524h8M586 518h10" stroke="#eb1731" stroke-width="5"/>
            <!-- wall axes -->
            <g stroke-width="5"><path d="M30 470V400" stroke="#0909ce"/><path d="M22 412l10-26 10 26z" fill="#0909ce"/><path d="M30 470l52-36" stroke="#08ce12"/><path d="M72 432l26-12-16 23z" fill="#08ce12"/><path d="M30 470l52 30" stroke="#ef1111"/><path d="M84 491l22 23-29-8z" fill="#ef1111"/></g>
            <g class="axis-text"><text x="32" y="384">N</text><text x="102" y="419">M</text><text x="109" y="521">L</text></g>
          </g>
          <g transform="translate(220 345) scale(.33333)" fill="none" stroke-width="3">
            <path d="M168 177l3-55M164 124l8-32 5 32z" stroke="#2525e5" fill="#2525e5" fill-opacity=".6"/>
            <path d="M168 177l-42 28M93 227l22-24 10 7z" stroke="#e22d2d"/>
            <path d="M168 177l47 28M250 225l-35-21-5 10z" stroke="#2ce22e"/>
            <g class="axis-text"><text x="171" y="74">Z</text><text x="77" y="236">X</text><text x="266" y="235">Y</text></g>
          </g>
        </svg>
      </div>
    </div>
    <div class="bar">
      <span class="handle"></span>
      <button class="ico" aria-label="Mesh"><svg viewBox="0 0 16 16"><use href="#grid"/></svg></button>
      <svg class="down"><use href="#down"/></svg>
      <span class="handle"></span>
      <button class="ico" aria-label="Assemblies"><svg viewBox="0 0 16 16"><use href="#folder"/><use href="#trio" x="2" y="3" width="13" height="13"/></svg></button>
      <button class="ico blue" aria-label="Components"><svg viewBox="0 0 16 16"><use href="#folder"/><use href="#plate" x="3" y="4" width="12" height="12"/></svg></button>
      <button class="ico" aria-label="Materials"><svg viewBox="0 0 16 16"><use href="#folder"/><use href="#graph" x="4" y="4" width="12" height="12"/></svg></button>
      <button class="ico" aria-label="Properties"><svg viewBox="0 0 16 16"><use href="#folder"/><use href="#graysection" x="2" y="3" width="13" height="13"/></svg></button>
      <button class="ico" aria-label="Loads"><svg viewBox="0 0 16 16"><use href="#folder"/><use href="#load" x="3" y="1" width="12" height="12"/><path d="M11 10h5v5h-5z" fill="#3d9a32"/></svg></button>
      <button class="ico" aria-label="Systems"><svg viewBox="0 0 16 16"><use href="#folder"/><use href="#axes" x="2" y="2" width="12" height="12"/><path d="M11 10h5v5h-5z" fill="#3d9a32"/></svg></button>
      <svg class="down"><use href="#down"/></svg>
      <span class="sep"></span>
      <button class="ico" aria-label="Delete"><svg viewBox="0 0 16 16"><use href="#cross" x="2" y="2" width="12" height="13"/></svg></button>
      <button class="ico" aria-label="Card edit"><svg viewBox="0 0 16 16"><use href="#stack"/></svg></button>
      <button class="ico" aria-label="Organize"><svg viewBox="0 0 16 16"><use href="#folder"/><use href="#folder" x="3" y="5" width="14" height="14"/><path d="M4 5l4 6 4-1-3 4-4-3z" fill="#d22"/></svg></button>
      <button class="ico" aria-label="Renumber"><svg viewBox="0 0 16 16"><use href="#nums" x="1" y="1" width="14" height="14"/></svg></button>
      <span class="handle"></span>
      <label class="combo"><svg viewBox="0 0 16 16"><g color="#5c6ca6"><use href="#leaf" y="-1" width="15"/></g><use href="#rainbow"/></svg><select aria-label="Color mode"><option>Auto</option></select><svg class="down"><use href="#down"/></svg></label>
      <button class="ico white" aria-label="Wireframe"><svg viewBox="0 0 16 16"><use href="#leaf"/></svg></button>
      <svg class="down"><use href="#down"/></svg>
      <button class="ico purple" aria-label="Shaded"><svg viewBox="0 0 16 16"><use href="#leaf"/></svg></button>
      <svg class="down"><use href="#down"/></svg>
      <button class="ico" aria-label="Solid view"><svg viewBox="0 0 16 16"><use href="#cube"/></svg></button>
      <span class="sep"></span>
      <button class="ico" aria-label="Element color"><svg viewBox="0 0 16 16"><use href="#cube" x="1" width="13" height="12"/><use href="#rainbow"/></svg></button>
      <span class="byc">By C</span>
    </div>
    <div class="menu">
      <div class="col"><button>nodes</button><button>node edit</button><button>temp nodes</button><button>distance</button><button>points</button></div>
      <div class="col"><button>lines</button><button>line edit</button><button>length</button></div>
      <div class="col"><button>surfaces</button><button>surface edit</button><button>defeature</button><button>midsurface</button><button>dimensioning</button></div>
      <div class="col"><button aria-label="solids"></button><button aria-label="solid edit"></button><button aria-label="ribs"></button></div>
    </div>
  </main>
</div>
</body>
</html>
```
FILE: styles.css
```css
* { box-sizing: border-box; }
body { margin: 0; background: #efefef; color: #222; font: 7px/11px "Liberation Sans", Arial, sans-serif; }
button, input, select { font: inherit; color: inherit; margin: 0; padding: 0; border: 0; background: none; }
svg { display: block; overflow: visible; }
.defs { position: absolute; width: 0; height: 0; }
.app { display: flex; min-height: 100vh; border: 2px solid #838383; border-right-width: 1px; overflow: hidden; }

/* sidebar */
.sidebar { flex: 0 0 213px; display: flex; flex-direction: column; padding: 2px 1px 3px 0; }
.tabs { display: flex; height: 12px; border-bottom: 1px solid #8d97a5; }
.tab { height: 12px; padding: 0 8px 0 2px; border: 1px solid #9a9a9a; border-left: 0; border-bottom-color: #8d97a5; background: #ededed; text-align: left; line-height: 11px; white-space: nowrap; }
.tab:first-child { border-left: 1px solid #9a9a9a; }
.tab-on { background: #fafafa; border-bottom-color: #fafafa; padding: 0 3px 0 2px; }
.x { margin-left: 2px; }
.panel { position: relative; flex: 1; border: 1px solid #a5adb8; border-top: 0; }
.tools { display: flex; align-items: center; gap: 1px; }
.ico { flex: 0 0 16px; width: 16px; height: 16px; }
.ico svg { width: 16px; height: 16px; }
.on { background: #fbbd72; outline: 1px solid #e5c9a4; }
.blue { color: #1b2fd8; }
.white { color: #fff; }
.purple { color: #6670b5; }
.down { flex: 0 0 4px; width: 4px; height: 4px; }
.tools-a { height: 20px; padding-left: 1px; }
.tools-a .on { margin-right: 1px; }
.search { display: flex; align-items: center; gap: 3px; height: 14px; background: #fafafa; border-bottom: 1px solid #e5e5e5; }
.search input { flex: 1; min-width: 0; height: 12px; outline: 0; }
.search .ico svg { width: 14px; }
.more { width: 12px; height: 12px; margin-left: 2px; background: #f2f2f2; }
.more svg { width: 9px; height: 9px; margin: auto; }
.tools-b { height: 21px; padding-left: 1px; }
.tools-b .down { margin: 0 2px 0 1px; }
.first-eye { margin-left: 4px; }
.entity { margin-left: 8px; }
.entity ~ .ico { margin-left: 1px; }

.tree { display: flex; height: 121px; border-top: 1px solid #c9c9c9; background: #fafafa; overflow: hidden; }
.tree-main { flex: 1; min-width: 0; }
.tree-head { height: 10px; padding-left: 1px; line-height: 10px; background: linear-gradient(#f8f8f8, #e3e3e3); }
.rows { display: grid; grid-template-rows: repeat(10, minmax(0, 1fr)); height: 116px; margin: 0; padding: 0; list-style: none; }
.rows li { display: flex; align-items: center; padding-left: 3px; white-space: nowrap; }
.rows svg { flex: 0 0 12px; width: 12px; height: 11px; margin: 0 1px 0 3px; }
.box { display: flex; align-items: center; justify-content: center; flex: 0 0 6px; height: 6px; border: 1px solid #a3a9b1; color: #456; font-size: 6px; line-height: 4px; }
.rows .child { margin: 0 43px 0 6px; padding-left: 0; border-left: 1px dotted #aaa; }
.child::before { content: ""; flex: 0 0 12px; border-top: 1px dotted #aaa; }
.rows .child svg { margin: 0 4px 0 3px; }
.rows .chosen { background: linear-gradient(90deg, #fafafa 15px, #e3e3e3 15px); }
.id { width: 5px; margin-left: auto; }
.swatch { display: block; width: 9px; height: 9px; border: 1px solid #77774e; background: #ff0; }
.rows .swatch { margin-left: 2px; }
.sw-blue { background: #1818d8; border-color: #11114c; }
.inc { width: 7px; margin-left: 19px; }
.scroll { display: flex; flex-direction: column; flex: 0 0 10px; align-items: center; padding: 4px 0; background: #f0f0f0; border-left: 1px solid #e2e2e2; }
.scroll svg { width: 4px; height: 3px; }
.flip { transform: rotate(180deg); transform-origin: 2px 2px; }
.thumb { width: 9px; height: 42px; margin: 53px 0 auto; border: 1px solid #b3b3b3; border-radius: 1px; background: linear-gradient(90deg, #fff, #d9d9d9); }
.thumb::after { content: ""; display: block; height: 5px; margin: 18px 2px; border: solid #888; border-width: 1px 0; }
.split { display: flex; align-items: center; justify-content: space-between; height: 6px; padding: 0 6px 0 102px; border-top: 1px solid #ccc; }
.grip { width: 5px; border-top: 1px dotted #333; }
.split svg { width: 6px; height: 4px; }

.props { width: 100%; border-collapse: collapse; table-layout: fixed; background: #fafafa; }
.props tr { height: 11px; }
.props td, .props th { height: 11px; padding: 0 0 0 2px; line-height: 11px; text-align: left; font-weight: normal; white-space: nowrap; }
.props th { padding-left: 1px; }
.props thead th { background: linear-gradient(#f6f6f6, #dedede); box-shadow: inset 0 1px #bbb; font-size: 8px; }
.props thead th:first-child { width: 79px; border-right: 1px solid #c3c3c3; }
.props td:first-child { padding-left: 13px; }
.sub td:first-child { padding-left: 24px; }
.group-row { display: flex; align-items: center; gap: 3px; height: 11px; padding-left: 2px; }
.group-row span { flex: 1; font: bold 8px/9px "Liberation Sans", sans-serif; border: solid #b5b5b5; border-width: 1px 0; background: #f4f4f4; }
.dim { color: #858585; }
.props input { display: block; appearance: none; width: 9px; height: 9px; border: 1px solid #999; background: linear-gradient(135deg, #c9c9c9, #f6f6f6); box-shadow: inset 0 0 0 1px #eee; }

.popup { position: absolute; z-index: 2; left: 88px; top: 53px; width: 87px; padding: 3px 2px 1px; display: grid; grid-template-columns: repeat(5, 1fr); border: 1px solid #999; background: #f3f3f3; box-shadow: 1px 1px 2px #777; }
.popup button { height: 17px; display: flex; align-items: center; justify-content: center; }
.popup svg { width: 14px; height: 14px; }
.popup .picked { background: #42708e; }
.tip { position: absolute; z-index: 3; left: 171px; top: 142px; padding: 0; border: 1px solid #aaa; background: #ffffe5; font-size: 8px; line-height: 10px; }

/* work area */
.main { flex: 1; min-width: 0; margin-left: 2px; display: flex; flex-direction: column; padding: 11px 0 0; border-left: 1px solid #9b9b9b; }
.stage { flex: 1; min-height: 0; display: flex; }
.vtools { flex: 0 0 22px; display: flex; flex-direction: column; align-items: center; gap: 1px; padding-top: 1px; }
.vtools .ico svg { width: 14px; height: 14px; margin: auto; }
.handle-h { width: 15px; height: 3px; margin-bottom: 2px; border-top: 1px dotted #333; }
.vtools .label svg, .vtools .numbers svg { width: 14px; height: 8px; }
.vtools span { display: block; font-size: 6px; font-weight: bold; line-height: 7px; }
.view { flex: 1; min-width: 0; display: flex; border: 1px solid #35d6dc; border-right: 0; background: linear-gradient(#365b88, #647892 50%, #8b939b 80%, #9c9c9c); }
.view svg { flex: 1; min-width: 0; width: 100%; height: auto; overflow: hidden; }
.axis-text { font: 24px "Liberation Sans", sans-serif; fill: #e6e6e6; stroke: none; }
.bar { display: flex; align-items: center; gap: 1px; height: 20px; padding-left: 4px; overflow: hidden; }
.handle { flex: 0 0 1px; height: 14px; margin: 0 2px 0 1px; border-left: 1px dotted #333; }
.bar .down { margin: 0 1px; }
.bar .combo .down { margin: 0 2px; }
.sep { flex: 0 0 1px; height: 12px; margin: 0 1px; background: #bbb; }
.combo { flex: 0 0 61px; display: flex; align-items: center; height: 14px; background: linear-gradient(90deg, #efefef 12px, #fafafa 12px); }
.combo > svg:first-child { flex: 0 0 13px; width: 13px; height: 14px; }
.combo select { flex: 1; min-width: 0; appearance: none; }
.byc { white-space: nowrap; }
.menu { display: grid; grid-template-columns: 127px 127px 122px 1fr; height: 100px; margin: 1px 0 2px; padding-top: 9px; border-top: 1px solid #c7c7c7; border-bottom: 1px solid #999; overflow: hidden; }
.menu button { display: block; width: 100%; height: 12px; border: solid; border-width: 1px 1px 1px 0; border-color: #fafafa #888 #888; font-size: 8px; line-height: 10px; }
```
